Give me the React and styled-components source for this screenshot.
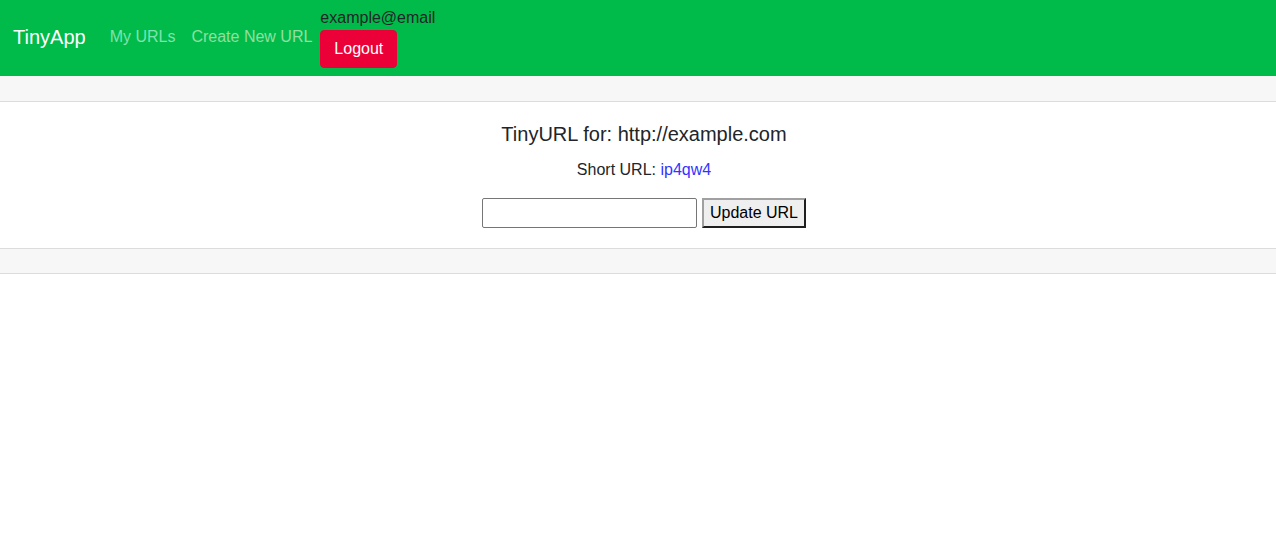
import React from 'react';
import styled, { createGlobalStyle } from 'styled-components';

const GlobalStyle = createGlobalStyle`
  body {
    margin: 0;
    font-family: "Liberation Sans", Arial, sans-serif;
    font-size: 16px;
    line-height: 1.5;
    color: #212529;
    background: #fff;
  }
`;

const Navbar = styled.nav`
  display: flex;
  align-items: center;
  height: 76px;
  padding: 0 16px 2px 13px;
  box-sizing: border-box;
  background: #00bb4a;
`;

const Brand = styled.a`
  font-size: 20px;
  line-height: 30px;
  color: #fff;
  text-decoration: none;
  margin-right: 24px;
`;

const NavLink = styled.a`
  font-size: 16px;
  line-height: 24px;
  color: ${props => props.tint};
  text-decoration: none;
  margin-right: 16px;
  margin-top: -1px;
  &:last-of-type { margin-right: 8px; }
`;

const UserBox = styled.div`
  display: flex;
  flex-direction: column;
  align-items: flex-start;
  padding-top: 8px;
  margin-top: -8px;
`;

const Email = styled.span`
  font-size: 16px;
  line-height: 24px;
  color: #212529;
`;

const LogoutButton = styled.button`
  font-family: inherit;
  font-size: 16px;
  line-height: 24px;
  padding: 6px 13px;
  height: 38px;
  border: 1px solid #eb0038;
  border-radius: 4px;
  background: #eb0038;
  color: #fff;
`;

const Card = styled.section`
  border-bottom: 1px solid #dcdcdc;
`;

const CardHeader = styled.div`
  height: 25px;
  background: #f7f7f7;
  border-bottom: 1px solid #dcdcdc;
`;

const CardBody = styled.div`
  padding: 20px 20px 20px 32px;
  text-align: center;
`;

const Title = styled.h5`
  margin: 0 0 11px;
  font-size: 20px;
  font-weight: 400;
  line-height: 24px;
`;

const Text = styled.p`
  margin: 0 0 17px;
  line-height: 24px;
  position: relative;
  top: 1px;
`;

const ShortLink = styled.a`
  color: #3434ff;
  text-decoration: none;
`;

const Form = styled.form`
  display: flex;
  justify-content: center;
  align-items: center;
  gap: 5px;
  height: 30px;
  margin: 0;
`;

const Input = styled.input`
  width: 215px;
  height: 30px;
  box-sizing: border-box;
  border: 1px solid #767676;
  border-radius: 2px;
  font-family: inherit;
  font-size: 16px;
  padding: 1px 4px;
`;

const SubmitButton = styled.button`
  width: 104px;
  height: 30px;
  box-sizing: border-box;
  padding: 0;
  font-family: inherit;
  font-size: 16px;
  color: #000;
  background: #efefef;
  border: 2px solid #1f1f1f;
  border-top-color: #a0a0a0;
  border-left-color: #a0a0a0;
  border-radius: 0;
`;

const CardFooter = styled.div`
  height: 24px;
  background: #f7f7f7;
  border-top: 1px solid #dcdcdc;
`;

export default function App() {
  return (
    <>
      <GlobalStyle />
      <Navbar>
        <Brand href="#">TinyApp</Brand>
        <NavLink href="#" tint="#7de3b0">My URLs</NavLink>
        <NavLink href="#" tint="#8fe0a0">Create New URL</NavLink>
        <UserBox>
          <Email>example@email</Email>
          <LogoutButton>Logout</LogoutButton>
        </UserBox>
      </Navbar>
      <Card>
        <CardHeader />
        <CardBody>
          <Title>TinyURL for: http://example.com</Title>
          <Text>Short URL: <ShortLink href="#">ip4qw4</ShortLink></Text>
          <Form onSubmit={e => e.preventDefault()}>
            <Input type="text" />
            <SubmitButton type="submit">Update URL</SubmitButton>
          </Form>
        </CardBody>
        <CardFooter />
      </Card>
    </>
  );
}
